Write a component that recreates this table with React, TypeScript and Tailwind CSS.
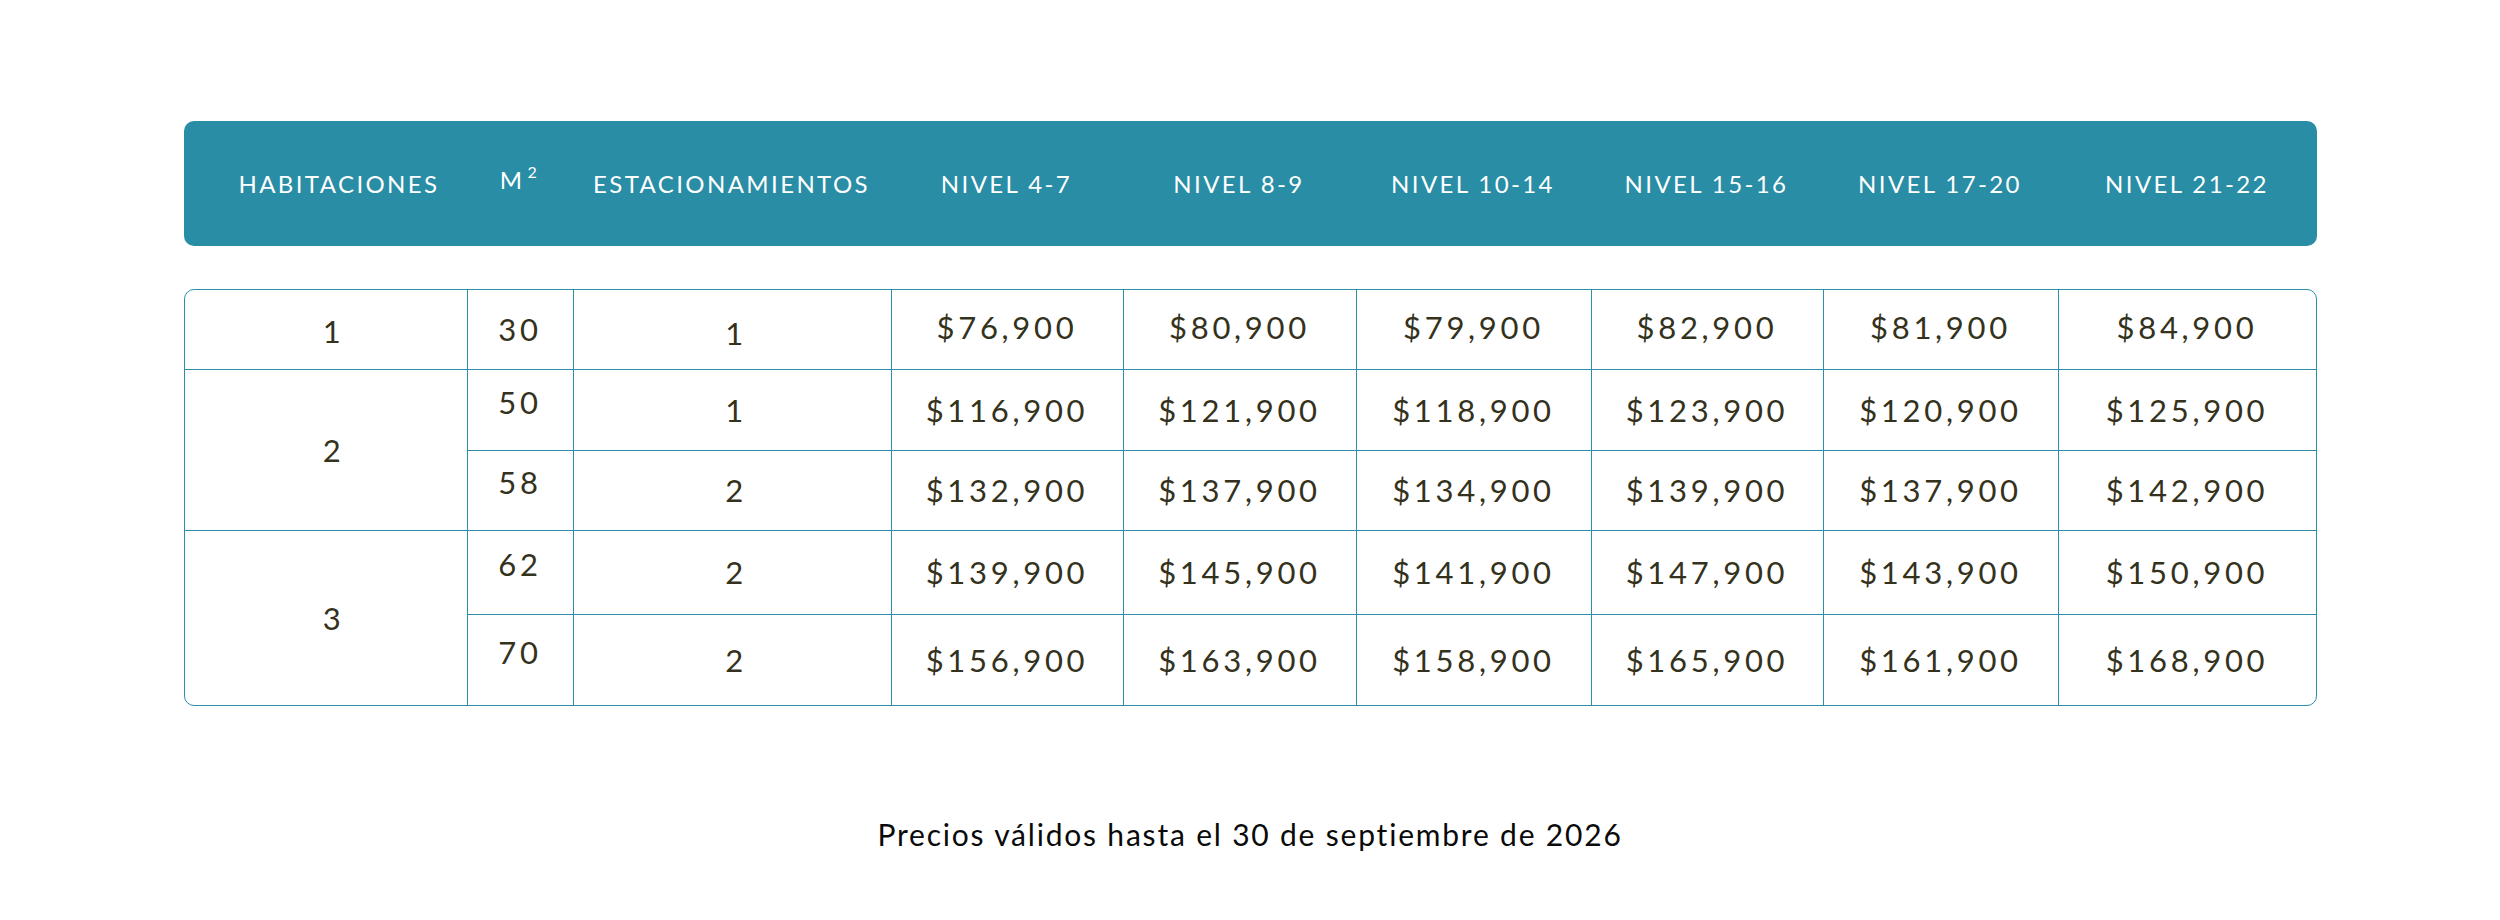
const cols =
  'grid grid-cols-[283px_106px_318px_232px_233px_235px_232px_235px_1fr]'

const headers = [
  'Nivel 4-7',
  'Nivel 8-9',
  'Nivel 10-14',
  'Nivel 15-16',
  'Nivel 17-20',
  'Nivel 21-22',
]

// one entry per unit type; rooms merge across their rows
const units = [
  { rooms: 1, m2: 30, parking: 1, prices: ['$76,900', '$80,900', '$79,900', '$82,900', '$81,900', '$84,900'] },
  { rooms: 2, m2: 50, parking: 1, prices: ['$116,900', '$121,900', '$118,900', '$123,900', '$120,900', '$125,900'] },
  { rooms: 2, m2: 58, parking: 2, prices: ['$132,900', '$137,900', '$134,900', '$139,900', '$137,900', '$142,900'] },
  { rooms: 3, m2: 62, parking: 2, prices: ['$139,900', '$145,900', '$141,900', '$147,900', '$143,900', '$150,900'] },
  { rooms: 3, m2: 70, parking: 2, prices: ['$156,900', '$163,900', '$158,900', '$165,900', '$161,900', '$168,900'] },
]

const cell = 'flex items-center justify-center border-[#2b8fa8]'

export default function App() {
  return (
    <div className="min-h-screen bg-white pt-[121px] font-['Lato',sans-serif]">
      <div className="mx-auto w-[2133px]">
        {/* Header bar */}
        <div className={`${cols} h-[125px] rounded-[10px] bg-[#288da5] text-[24px] uppercase tracking-[0.1em] text-white`}>
          <div className="flex items-center justify-center pl-[28px]">Habitaciones</div>
          <div className="flex items-center justify-center pb-[8px]">
            M<sup className="ml-[3px] text-[16px]">2</sup>
          </div>
          <div className="flex items-center justify-center">Estacionamientos</div>
          {headers.map((h) => (
            <div key={h} className="flex items-center justify-center">
              {h}
            </div>
          ))}
        </div>

        {/* Price table */}
        <div
          className={`${cols} mt-[43px] grid-rows-[80px_81px_80px_84px_90px] overflow-hidden rounded-[10px] border-[1.5px] border-[#2b8fa8] text-[31px] tracking-[0.12em] text-[#34321c]`}
        >
          <div className={`${cell} row-start-1 border-r-[1.5px] border-b-[1.5px] pt-[4px] pl-[16px]`}>1</div>
          <div className={`${cell} col-start-1 row-span-2 row-start-2 border-r-[1.5px] border-b-[1.5px] pl-[16px]`}>2</div>
          <div className={`${cell} col-start-1 row-span-2 row-start-4 border-r-[1.5px] pl-[16px]`}>3</div>

          {units.map((u, i) => {
            const last = i === units.length - 1
            const bb = last ? '' : 'border-b-[1.5px]'
            return (
              <div key={u.m2} className="contents">
                <div
                  className={`${cell} col-start-2 border-r-[1.5px] ${bb} ${i === 0 ? '' : 'pb-[16px]'}`}
                  style={{ gridRowStart: i + 1 }}
                >
                  {u.m2}
                </div>
                <div
                  className={`${cell} col-start-3 border-r-[1.5px] ${bb} pl-[8px] ${i === 0 ? 'pt-[8px]' : ''}`}
                  style={{ gridRowStart: i + 1 }}
                >
                  {u.parking}
                </div>
                {u.prices.map((p, j) => (
                  <div
                    key={j}
                    className={`${cell} ${j < 5 ? 'border-r-[1.5px]' : ''} ${bb} ${i === 0 ? 'pb-[4px]' : ''}`}
                    style={{ gridRowStart: i + 1, gridColumnStart: j + 4 }}
                  >
                    {p}
                  </div>
                ))}
              </div>
            )
          })}
        </div>

        <p className="mt-[106px] text-center text-[30px] tracking-[0.06em] text-[#0a0a0a]">
          Precios válidos hasta el 30 de septiembre de 2026
        </p>
      </div>
    </div>
  )
}
